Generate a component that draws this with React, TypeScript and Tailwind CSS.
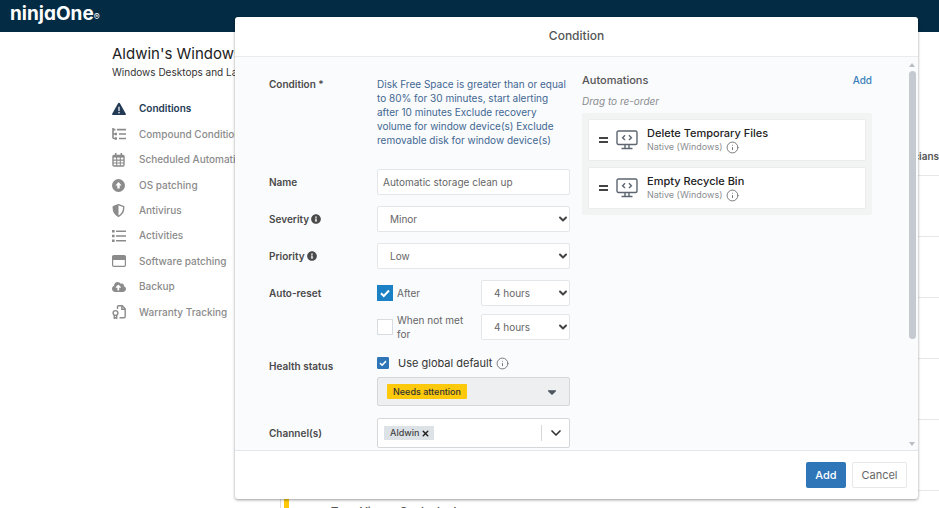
import { useState } from "react";
import type { ReactNode } from "react";
import clsx from "clsx";
import { FaCaretDown, FaCloudUploadAlt, FaInfoCircle } from "react-icons/fa";
import { ChevronDown, Info, X } from "lucide-react";

const navItems = [
  { label: "Conditions", icon: <WarningIcon />, active: true },
  { label: "Compound Conditions", icon: <TreeIcon /> },
  { label: "Scheduled Automations", icon: <CalendarIcon /> },
  { label: "OS patching", icon: <ArrowCircleIcon /> },
  { label: "Antivirus", icon: <ShieldIcon /> },
  { label: "Activities", icon: <ListIcon /> },
  { label: "Software patching", icon: <WindowIcon /> },
  { label: "Backup", icon: <FaCloudUploadAlt size={14} /> },
  { label: "Warranty Tracking", icon: <WarrantyIcon /> },
];

const automations = [
  { name: "Delete Temporary Files", source: "Native (Windows)" },
  { name: "Empty Recycle Bin", source: "Native (Windows)" },
];

function WarningIcon() {
  return (
    <svg width="14" height="14" viewBox="0 0 14 14">
      <path d="M6.100 1.300a1 1 0 0 1 1.800 0l5.900 10.400a.9.9 0 0 1-.8 1.300H1a.9.9 0 0 1-.8-1.300z" fill="currentColor" />
      <path d="M7 5v3.600" stroke="#fff" strokeWidth="1.200" strokeLinecap="round" />
      <circle cx="7" cy="10.800" r=".8" fill="#fff" />
    </svg>
  );
}

function TreeIcon() {
  return (
    <svg width="14" height="12" viewBox="0 0 14 12" fill="none" stroke="currentColor" strokeWidth="1.600">
      <path d="M1 0v9.600q0 .9.9.9h2.600M1 1.600h2.500M1 6h3.500M5 1.600h9M7 6h7M7 10.500h7" />
      <path d="M3.900 4.800v2.400M3.900 9.300v2.400" strokeWidth="2" />
    </svg>
  );
}

function CalendarIcon() {
  return (
    <svg width="13" height="14" viewBox="0 0 13 14" fill="none" stroke="currentColor">
      <rect x="1" y="2.500" width="11" height="10.500" rx="1" strokeWidth="1.400" />
      <path d="M1 3.500h11" strokeWidth="2.200" />
      <path d="M3.700 0v3M9.300 0v3" strokeWidth="1.600" />
      <path d="M4.700 4v9M8.300 4v9M1 7.100h11M1 10h11" strokeWidth="1.100" />
    </svg>
  );
}

function ArrowCircleIcon() {
  return (
    <svg width="13" height="13" viewBox="0 0 13 13">
      <circle cx="6.500" cy="6.500" r="6.500" fill="currentColor" />
      <path d="M6.500 3L3.400 6.400h1.900v3h2.400v-3h1.900z" fill="#fff" />
    </svg>
  );
}

function ShieldIcon() {
  return (
    <svg width="13" height="13" viewBox="0 0 13 13">
      <path d="M6.500.7l5.200 2c.2 4.200-1.500 7.700-5.200 9.600C2.800 10.400 1.100 6.900 1.300 2.700z" fill="none" stroke="currentColor" strokeWidth="1.400" strokeLinejoin="round" />
      <path d="M6.500.7v11.600C2.800 10.400 1.100 6.900 1.300 2.700z" fill="currentColor" />
    </svg>
  );
}

function ListIcon() {
  return (
    <svg width="14" height="12" viewBox="0 0 14 12" fill="currentColor">
      <path d="M0 0h2.600v2.600H0zM0 4.700h2.600v2.600H0zM0 9.400h2.600V12H0z" />
      <path d="M4 .6h10v1.400H4zM4 5.300h10v1.400H4zM4 10h10v1.400H4z" />
    </svg>
  );
}

function WindowIcon() {
  return (
    <svg width="14" height="12" viewBox="0 0 14 12">
      <rect x=".6" y=".6" width="12.800" height="10.800" rx="1.200" fill="none" stroke="currentColor" strokeWidth="1.200" />
      <path d="M.6 1h12.800v4H.6z" fill="currentColor" />
    </svg>
  );
}

function WarrantyIcon() {
  return (
    <svg width="14" height="14" viewBox="0 0 14 14" fill="none" stroke="currentColor" strokeWidth="1.400">
      <path d="M5.500 4V2q0-1.200 1.200-1.200h3.600l2.900 2.900v7.800q0 1.200-1.200 1.200H7.500M9.800 1v3.200h3.200" />
      <circle cx="3.500" cy="8" r="2.400" />
      <path d="M2.300 10v3.400l1.200-.8 1.200.8V10" />
    </svg>
  );
}

function ScriptIcon() {
  return (
    <svg width="22" height="20" viewBox="0 0 22 20" fill="none" stroke="#5d6570" strokeWidth="1.400">
      <rect x="1" y="1" width="20" height="13.500" rx="1.500" />
      <path d="M9 14.500v3.500M13 14.500v3.500M5.500 18.500h11" />
      <path d="M9 5.300L6.600 7.700 9 10.100M13 5.300l2.400 2.400L13 10.100" />
    </svg>
  );
}

function Logo() {
  return (
    <a
      href="#home"
      className="flex items-baseline text-[19px] leading-6 font-bold text-white [font-feature-settings:'cv11']"
    >
      ninjaOne<span className="text-[9px] font-normal">®</span>
    </a>
  );
}

function Select({ id, options, label }: { id: string; options: string[]; label?: string }) {
  return (
    <div className="relative">
      <select
        id={id}
        aria-label={label}
        className="h-[26px] w-full appearance-none rounded-xs border border-[#e4e7ea] bg-white pr-5 pl-3 text-[10px] text-[#666]"
      >
        {options.map((o) => (
          <option key={o}>{o}</option>
        ))}
      </select>
      <ChevronDown size={12} strokeWidth={4} className="pointer-events-none absolute top-[7px] right-px text-[#444]" />
    </div>
  );
}

function Row({ label, htmlFor, info, className, children }: {
  label: string;
  htmlFor?: string;
  info?: boolean;
  className?: string;
  children: ReactNode;
}) {
  return (
    <div className={clsx("flex", className)}>
      <label htmlFor={htmlFor} className="flex h-[26px] w-[108px] shrink-0 items-center gap-0.5 font-semibold text-[#4a4a4a]">
        {label}
        {info && <FaInfoCircle size={10} />}
      </label>
      <div className="min-w-0 flex-1">{children}</div>
    </div>
  );
}

function Checkbox({ id, checked, onChange, className }: {
  id: string;
  checked: boolean;
  onChange: (v: boolean) => void;
  className: string;
}) {
  return (
    <span className="relative flex shrink-0">
      <input
        id={id}
        type="checkbox"
        checked={checked}
        onChange={(e) => onChange(e.target.checked)}
        className={clsx("appearance-none border border-[#d9dcdf] bg-white", className)}
      />
      {checked && (
        <svg viewBox="0 0 16 16" className="pointer-events-none absolute inset-0 size-full" fill="none" stroke="#fff" strokeWidth="2">
          <path d="M4 8.200l2.800 2.800 5.200-5.500" />
        </svg>
      )}
    </span>
  );
}

function ConditionForm() {
  const [after, setAfter] = useState(true);
  const [notMet, setNotMet] = useState(false);
  const [globalDefault, setGlobalDefault] = useState(true);

  return (
    <div className="w-[301px] shrink-0 text-[10px] leading-[14px]">
      <div className="flex">
        <span className="w-[108px] shrink-0 font-semibold text-[#4a4a4a]">Condition *</span>
        <a href="#condition" className="flex-1 text-[#3f6791]">
          Disk Free Space is greater than or equal to 80% for 30 minutes, start alerting after 10 minutes Exclude
          recovery volume for window device(s) Exclude removable disk for window device(s)
        </a>
      </div>

      <Row label="Name" htmlFor="name" className="mt-[22px]">
        <input
          id="name"
          defaultValue="Automatic storage clean up"
          className="h-[26px] w-full rounded-xs border border-[#e4e7ea] bg-white px-[5px] text-[#666]"
        />
      </Row>
      <Row label="Severity" htmlFor="severity" info className="mt-[11px]">
        <Select id="severity" options={["Minor", "Moderate", "Major", "Critical"]} />
      </Row>
      <Row label="Priority" htmlFor="priority" info className="mt-[11px]">
        <Select id="priority" options={["Low", "Medium", "High"]} />
      </Row>
      <Row label="Auto-reset" className="mt-[11px]">
        <div className="flex h-[26px] items-center gap-1 text-[#666]">
          <Checkbox id="after" checked={after} onChange={setAfter} className="size-4 checked:border-[#1c80c4] checked:bg-[#1c80c4]" />
          <label htmlFor="after" className="flex-1">After</label>
          <div className="w-[89px]"><Select id="after-time" label="Reset after" options={["4 hours", "8 hours"]} /></div>
        </div>
        <div className="mt-[7px] flex items-center gap-1 text-[#666]">
          <Checkbox id="not-met" checked={notMet} onChange={setNotMet} className="size-4 checked:border-[#1c80c4] checked:bg-[#1c80c4]" />
          <label htmlFor="not-met" className="flex-1 pr-2">When not met for</label>
          <div className="w-[89px]"><Select id="not-met-time" label="Reset when not met for" options={["4 hours", "8 hours"]} /></div>
        </div>
      </Row>
      <Row label="Health status" className="mt-3">
        <div className="flex h-5 items-center text-[11px] text-[#333]">
          <Checkbox id="global" checked={globalDefault} onChange={setGlobalDefault} className="size-3 rounded-[1px] checked:border-[#2f76b8] checked:bg-[#2f76b8]" />
          <label htmlFor="global" className="ml-[9px]">Use global default</label>
          <Info size={13} strokeWidth={1.800} className="ml-1 text-[#777]" />
        </div>
        <button type="button" disabled className="mt-1 flex h-[29px] w-full items-center justify-between rounded-xs border border-[#d5d8db] bg-[#eeeff1] pr-2.5 pl-[9px]">
          <span className="rounded-[1px] bg-[#fdc90a] px-1.5 text-[9px] leading-[15px] font-medium text-[#333]">Needs attention</span>
          <FaCaretDown size={14} className="text-[#4c545e]" />
        </button>
      </Row>
      <Row label="Channel(s)" className="mt-3 items-center">
        <div className="flex h-[30px] items-center rounded-xs border border-[#d5d8db] bg-white pl-1.5">
          <span className="flex items-center gap-0.5 bg-[#dde2e7] px-1 pl-1.5 text-[9px] font-medium text-[#444]">
            Aldwin
            <button type="button" aria-label="Remove Aldwin"><X size={9} strokeWidth={4} className="text-[#222]" /></button>
          </span>
          <button type="button" aria-label="Show channels" className="ml-auto flex h-4 w-7 items-center justify-center border-l border-[#d5d8db]">
            <ChevronDown size={16} strokeWidth={2.500} className="text-[#333]" />
          </button>
        </div>
      </Row>
    </div>
  );
}

function Automations() {
  return (
    <section className="min-w-0 flex-1">
      <div className="flex items-center justify-between text-[11px] leading-4 font-medium text-[#555]">
        <h3>Automations</h3>
        <button type="button" className="text-[10px] text-[#3a80b8]">Add</button>
      </div>
      <p className="mt-[5px] text-[10px] leading-4 text-[#8a8d91] italic">Drag to re-order</p>
      <ul className="mt-1 flex flex-col gap-1.5 rounded-xs bg-[#f2f3f3] p-1.5">
        {automations.map((a) => (
          <li key={a.name} className="flex h-[42px] items-center rounded-xs border border-[#ececec] bg-white pl-2.5">
            <span className="flex w-[9px] flex-col gap-0.5">
              <i className="h-0.5 bg-[#444]" />
              <i className="h-0.5 bg-[#444]" />
            </span>
            <span className="mr-[9px] ml-2"><ScriptIcon /></span>
            <div>
              <p className="text-[11px] leading-[14px] font-medium text-[#222]">{a.name}</p>
              <p className="flex items-center gap-1 text-[9px] leading-[14px] text-[#8a8d91]">
                {a.source}
                <Info size={13} strokeWidth={1.800} className="text-[#777]" />
              </p>
            </div>
          </li>
        ))}
      </ul>
    </section>
  );
}

function ConditionDialog() {
  return (
    <div
      role="dialog"
      aria-labelledby="dialog-title"
      className="absolute top-[17px] right-[21px] bottom-[9px] left-[235px] flex flex-col rounded-[3px] bg-white shadow-[0_1px_3px_rgba(0,0,0,0.400)]"
    >
      <h2 id="dialog-title" className="h-10 shrink-0 border-b border-[#e9ebed] text-center text-xs leading-[38px] font-medium text-[#555]">
        Condition
      </h2>
      <div className="flex min-h-0 flex-1 bg-[#fafbfd]">
        <div className="flex min-w-0 flex-1 gap-3 overflow-hidden px-[34px]">
          <div className="pt-5"><ConditionForm /></div>
          <div className="flex min-w-0 flex-1 pt-[15px]"><Automations /></div>
        </div>
        <div className="flex w-3 flex-col items-center pt-1.5 pb-1">
          <i className="border-x-[3px] border-b-4 border-x-transparent border-b-[#b9bec4]" />
          <div className="flex min-h-0 w-[7px] flex-1 flex-col py-1">
            <i className="h-[73%] rounded-full bg-[#c5cad1]" />
          </div>
          <i className="border-x-[3px] border-t-4 border-x-transparent border-t-[#b9bec4]" />
        </div>
      </div>
      <div className="flex h-[49px] shrink-0 items-center justify-end gap-1.5 border-t border-[#e4e7ea] pr-[11px] text-[11px]">
        <button type="button" className="h-[26px] w-10 rounded-xs bg-[#2f76b8] font-medium text-white">Add</button>
        <button type="button" className="h-[26px] w-[55px] rounded-xs border border-[#e6e8ea] bg-white text-[#666]">Cancel</button>
      </div>
    </div>
  );
}

export default function App() {
  return (
    <div className="relative h-screen overflow-hidden bg-white font-[Inter,sans-serif]">
      <header className="flex h-8 bg-[#032b43] pt-0.5 pl-2.5">
        <Logo />
      </header>
      <div className="flex pl-[112px]">
        <div className="w-[168px] shrink-0">
          <h1 className="mt-3 text-[15px] leading-5 whitespace-nowrap text-[#222]">Aldwin's Windows</h1>
          <p className="mt-px text-[10px] leading-[14px] whitespace-nowrap text-[#333]">Windows Desktops and Laptops</p>
          <nav className="mt-[17px] grid h-[229px]">
            {navItems.map((item) => (
              <a
                key={item.label}
                href="#nav"
                className={clsx(
                  "flex items-center text-[10px] whitespace-nowrap",
                  item.active ? "font-semibold text-[#233a55]" : "font-medium text-[#8b8b8b]",
                )}
              >
                <span className="flex w-[27px] shrink-0">{item.icon}</span>
                {item.label}
              </a>
            ))}
          </nav>
        </div>
        <main className="mt-28 flex-1 border-l border-[#ddd] text-[11px] font-semibold text-[#555]">
          <div className="flex h-8 items-center justify-end border-b border-[#e8e8e8] pb-1.5 text-[10px]">Technicians</div>
          {[1, 2, 3, 4].map((n) => (
            <div key={n} className="h-[61px] border-b border-[#e8e8e8]" />
          ))}
          <div className="h-[71px] border-b border-[#e8e8e8]" />
          <div className="ml-[3px] flex h-12 border-l-[5px] border-[#fdc90a] pt-3 pl-[42px]">TeamViewer Geolocked</div>
        </main>
      </div>
      <ConditionDialog />
    </div>
  );
}
